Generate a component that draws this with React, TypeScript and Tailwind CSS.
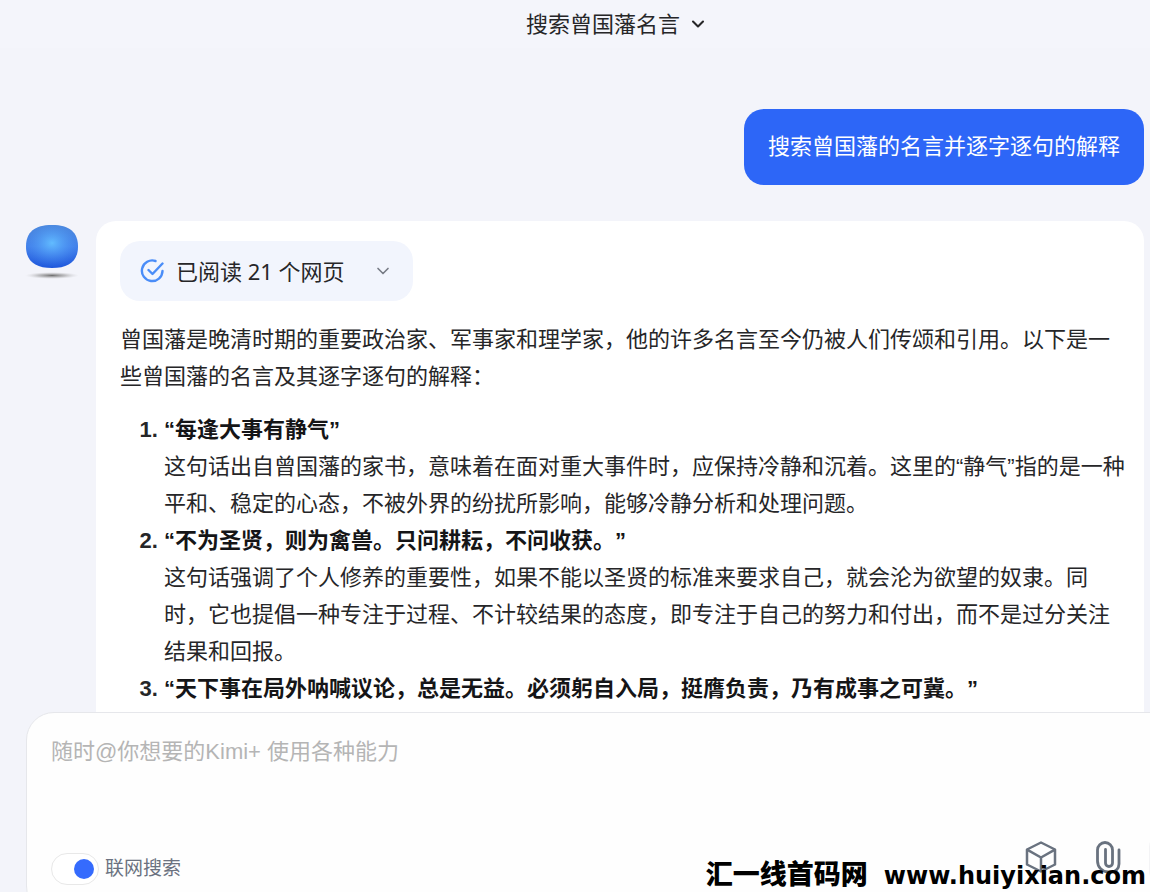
import { useState } from 'react';
import { ChevronDown } from 'lucide-react';

const quotes = [
  {
    title: '“每逢大事有静气”',
    text: '这句话出自曾国藩的家书，意味着在面对重大事件时，应保持冷静和沉着。这里的“静气”指的是一种平和、稳定的心态，不被外界的纷扰所影响，能够冷静分析和处理问题。',
  },
  {
    title: '“不为圣贤，则为禽兽。只问耕耘，不问收获。”',
    text: '这句话强调了个人修养的重要性，如果不能以圣贤的标准来要求自己，就会沦为欲望的奴隶。同时，它也提倡一种专注于过程、不计较结果的态度，即专注于自己的努力和付出，而不是过分关注结果和回报。',
  },
  {
    title: '“天下事在局外呐喊议论，总是无益。必须躬自入局，挺膺负责，乃有成事之可冀。”',
    text: '',
  },
];

function Avatar() {
  return (
    <svg viewBox="0 0 60 60" className="mt-0.5 h-15 w-15 shrink-0" aria-hidden="true">
      <defs>
        <linearGradient id="body" x1="0" y1="0" x2="0" y2="1">
          <stop offset="0" stopColor="#4a84d8" />
          <stop offset="0.5" stopColor="#4280ea" />
          <stop offset="1" stopColor="#1f58dc" />
        </linearGradient>
        <radialGradient id="glow" cx="0.5" cy="0.42" r="0.55">
          <stop offset="0" stopColor="#62bcff" />
          <stop offset="1" stopColor="#4a90f5" stopOpacity="0" />
        </radialGradient>
        <radialGradient id="shade">
          <stop offset="0" stopColor="#6f6f6f" />
          <stop offset="0.5" stopColor="#a9a9ab" stopOpacity="0.7" />
          <stop offset="1" stopColor="#d8d8dc" stopOpacity="0" />
        </radialGradient>
      </defs>
      <ellipse cx="30" cy="52.500" rx="27" ry="3.500" fill="url(#shade)" />
      <path d="M4 23.500C4 9 13 2 30 2s26 7 26 21.500S47 45 30 45 4 38 4 23.500z" fill="url(#body)" />
      <path d="M4 23.500C4 9 13 2 30 2s26 7 26 21.500S47 45 30 45 4 38 4 23.500z" fill="url(#glow)" />
    </svg>
  );
}

function ReadIcon() {
  return (
    <svg viewBox="0 0 24 24" className="h-6 w-6 shrink-0" fill="none" stroke="#4a8df8" strokeWidth="2.400" strokeLinecap="round" strokeLinejoin="round" aria-hidden="true">
      <path d="M15.500 2A10.300 10.300 0 1 0 22.500 12" />
      <path d="M8.500 11l4 4L22.500 4.500" />
    </svg>
  );
}

export default function App() {
  const [online, setOnline] = useState(true);
  const [message, setMessage] = useState('');

  return (
    <div lang="zh-CN" className="relative flex h-screen flex-col overflow-hidden bg-[#f3f4fa] font-['Liberation_Sans','Noto_Sans_CJK_SC',sans-serif] text-[22px] text-[#262628]">
      <header className="flex h-12 shrink-0 items-center justify-center bg-[#f4f5fb] pl-21">
        <button type="button" className="flex items-center gap-2">
          <span>搜索曾国藩名言</span>
          <ChevronDown className="h-5 w-5" strokeWidth={2.5} />
        </button>
      </header>

      <main className="flex min-h-0 flex-1 flex-col overflow-hidden pt-[61px] pr-1.5 pl-5.5">
        <div className="flex shrink-0 justify-end">
          <p className="rounded-[20px] bg-[#2d66f7] px-6 py-5 leading-9 text-white">搜索曾国藩的名言并逐字逐句的解释</p>
        </div>

        <div className="mt-9 flex shrink-0 items-start gap-3.5">
          <Avatar />
          <article className="min-w-0 flex-1 rounded-[20px] bg-white pt-5 pr-4 pb-6 pl-6">
            <button type="button" className="flex items-center rounded-[20px] bg-[#f2f5fd] py-3 pr-5 pl-5 font-['Noto_Sans','Noto_Sans_CJK_SC',sans-serif] leading-9">
              <ReadIcon />
              <span className="ml-3">已阅读 21 个网页</span>
              <ChevronDown className="ml-7 h-5 w-5 text-[#777b85]" />
            </button>
            <p className="mt-5 leading-[37px]">
              曾国藩是晚清时期的重要政治家、军事家和理学家，他的许多名言至今仍被人们传颂和引用。以下是一些曾国藩的名言及其逐字逐句的解释：
            </p>
            <ol className="mt-4 list-decimal pl-11 leading-[37px] marker:font-bold">
              {quotes.map((quote) => (
                <li key={quote.title}>
                  <strong className="text-[#151517] [text-spacing-trim:space-all]">{quote.title}</strong>
                  {quote.text && <p>{quote.text}</p>}
                </li>
              ))}
            </ol>
          </article>
        </div>
      </main>

      <form className="-mr-20 -mb-[22px] ml-6.5 shrink-0 rounded-[28px] border border-[#e6e7eb] bg-[#fefefe] pt-5 pr-6 pb-4 pl-6" onSubmit={(e) => e.preventDefault()}>
        <textarea
          aria-label="消息"
          value={message}
          onChange={(e) => setMessage(e.target.value)}
          placeholder="随时@你想要的Kimi+ 使用各种能力"
          className="block h-[102px] w-full resize-none leading-[37px] outline-none placeholder:text-[#b5b5b5]"
        />
        <div className="flex items-start">
          <label className="flex items-center gap-1.5 pt-4.5 text-[19px] text-[#6b7280]">
            <input
              type="checkbox"
              role="switch"
              checked={online}
              onChange={(e) => setOnline(e.target.checked)}
              className="flex h-8 w-12 appearance-none items-center rounded-full border border-[#e8e8e8] bg-white px-1 before:h-5 before:w-5 before:rounded-full before:bg-gray-300 checked:justify-end checked:before:bg-[#356bfd]"
            />
            联网搜索
          </label>
          <div className="ml-auto flex items-start gap-9 pt-1.5 pb-6 text-[#69727f]">
            <button type="button" aria-label="工具">
              <svg viewBox="0 0 32 32" className="h-8 w-8" fill="none" stroke="currentColor" strokeWidth="2.500" strokeLinejoin="round" strokeLinecap="round">
                <path d="M16 1.500L30 8.500v15L16 30.500 2 23.500v-15z" />
                <path d="M2.500 8.800L16 16.500l13.500-7.700M16 16.500v13.500" />
              </svg>
            </button>
            <button type="button" aria-label="附件">
              <svg viewBox="0 0 32 32" className="h-8 w-8" fill="none" stroke="currentColor" strokeWidth="2.800" strokeLinecap="round">
                <path d="M26 9v14a8 8 0 0 1-8 8h-3A11 11 0 0 1 4.500 20V9a7.500 7.500 0 0 1 15 0v13a3.500 3.500 0 0 1-7 0V8.500" />
              </svg>
            </button>
          </div>
          <button type="submit" aria-label="发送" className="ml-6 h-12 w-14 rounded-xl bg-[#f3f3f5]" />
        </div>
      </form>

      <p className="absolute right-1 -bottom-0.5 flex items-baseline gap-4 font-['DejaVu_Sans','Noto_Sans_CJK_SC',sans-serif] text-2xl leading-9 font-bold text-black">
        <span className="text-[27px] font-black">汇一线首码网</span>
        <span>www.huiyixian.com</span>
      </p>
    </div>
  );
}
